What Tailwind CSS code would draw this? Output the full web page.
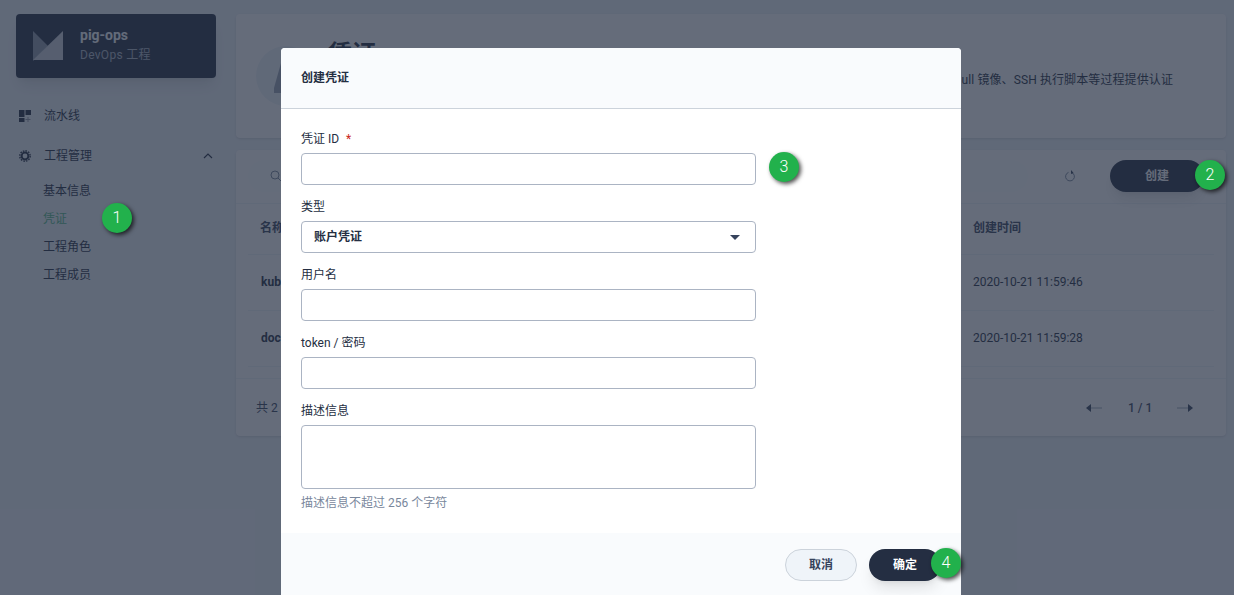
<!DOCTYPE html>
<html lang="zh">
<head>
    <meta charset="UTF-8">
    <title>凭证</title>
    <script src="https://cdn.jsdelivr.net/npm/@tailwindcss/browser@4"></script>
</head>
<body class="relative h-[595px] w-[1234px] overflow-hidden bg-[#eff4f9] font-['Roboto','Noto_Sans_CJK_SC',sans-serif] text-xs text-[#242e42]">

    <!-- Page behind the dialog -->
    <div class="flex h-full gap-5 py-3.5 pl-4 pr-2">
        <aside class="w-[200px] shrink-0">
            <div class="flex h-16 items-center rounded bg-[#242e42] pl-[17px] shadow-lg">
                <svg class="h-[30px] w-[30px]" viewBox="0 0 30 30">
                    <path d="M0 0 L15 15 L0 30 Z" fill="#8d98a8" />
                    <path d="M30 0 L30 29 L0 29 Z" fill="#cbd1da" />
                </svg>
                <div class="ml-[17px] -mt-[2px]">
                    <div class="text-sm font-bold leading-5 text-[#f9fbfd]">pig-ops</div>
                    <div class="text-xs leading-5 tracking-[0.3px] text-[#abb4c3]">DevOps 工程</div>
                </div>
            </div>
            <nav class="mt-[18px] pl-[3px]">
                <div class="flex h-10 items-center gap-[13px]">
                    <svg class="h-3 w-3" viewBox="0 0 12 12" fill="#242e42">
                        <rect width="5.5" height="7" />
                        <rect x="6.5" width="5.5" height="5" />
                        <rect y="8" width="5.5" height="4" />
                        <path d="M8.5 7h1v2h2v1h-2v2h-1v-2h-2V9h2z" opacity=".45" />
                    </svg>
                    <span>流水线</span>
                </div>
                <div class="flex h-10 items-center gap-[13px]">
                    <svg class="h-3 w-3" viewBox="0 0 12 12" fill="none" stroke="#242e42">
                        <circle cx="6" cy="6" r="3.4" stroke-width="2" />
                        <circle cx="6" cy="6" r="5.2" stroke-width="1.4" stroke-dasharray="1.6 1.1" />
                    </svg>
                    <span>工程管理</span>
                    <svg class="ml-auto mr-[3px] h-2 w-2.5" viewBox="0 0 10 8" fill="none" stroke="#242e42" stroke-width="1.2">
                        <path d="M1 6l4-4 4 4" />
                    </svg>
                </div>
                <ul class="mt-px pl-6 leading-7">
                    <li>基本信息</li>
                    <li class="text-[#55bc8a]">凭证</li>
                    <li>工程角色</li>
                    <li>工程成员</li>
                </ul>
            </nav>
        </aside>

        <main class="flex-1">
            <section class="flex h-[124px] items-center rounded bg-white pl-5 shadow-sm">
                <div class="h-[60px] w-[60px] shrink-0 rounded-full bg-[#eff4f9]">
                    <svg class="h-[60px] w-[60px]" viewBox="0 0 60 60">
                        <path d="M25 17 L18 42 L18 47 L32 47 L32 17 Z" fill="#9aa5b5" />
                    </svg>
                </div>
                <div class="ml-3 mt-6 self-start text-2xl leading-8 font-semibold">凭证</div>
                <div class="ml-auto mr-[53px] mt-2 tracking-[0.1px]">ull 镜像、SSH 执行脚本等过程提供认证</div>
            </section>
            <section class="mt-3 h-[286px] rounded bg-white shadow-sm">
                <div class="flex h-[54px] items-center border-b border-[#eff4f9] pb-px pl-3 pr-[22px]">
                    <div class="flex h-8 w-[780px] items-center rounded-full bg-[#fcfdfe] pl-[22px]">
                        <svg class="h-3 w-3" viewBox="0 0 12 12" fill="none" stroke="#79879c">
                            <circle cx="5" cy="5" r="4" />
                            <path d="M8 8l3.5 3.5" />
                        </svg>
                    </div>
                    <svg class="ml-auto mr-[34px] h-3 w-3" viewBox="0 0 12 12" fill="none" stroke="#79879c">
                        <path d="M7.5 2.4a4.4 4.4 0 1 1-3 0" />
                        <path d="M7 0l2.6 3L7 4z" fill="#36435c" stroke="none" />
                    </svg>
                    <div class="flex h-8 w-[94px] items-center justify-center rounded-full bg-[#242e42] font-bold text-white shadow-lg">创建</div>
                </div>
                <div class="mx-3">
                    <div class="flex h-[51px] items-center border-b border-[#eff4f9] pb-0.5 pl-3 font-bold text-[#36435c]">名称<span class="ml-auto w-[241px]">创建时间</span></div>
                    <div class="flex h-14 items-center border-b border-[#eff4f9] pb-0.5 pl-[13px]"><b>kub</b><span class="ml-auto w-[241px]">2020-10-21 11:59:46</span></div>
                    <div class="flex h-14 items-center border-b border-[#eff4f9] pb-0.5 pl-[13px]"><b>doc</b><span class="ml-auto w-[241px]">2020-10-21 11:59:28</span></div>
                </div>
                <div class="mt-[11px] flex h-[58px] items-center border-t border-[#eff4f9] pl-5 pr-[33px] text-[#36435c]">
                    共 2
                    <svg class="ml-auto h-2.5 w-4" viewBox="0 0 16 10">
                        <path d="M0 5l5-4v8z" fill="#36435c" />
                        <path d="M5 4.5h11v1H5z" fill="#9aa5b5" />
                    </svg>
                    <span class="mx-[26px] w-[23px] whitespace-nowrap text-center font-medium">1 / 1</span>
                    <svg class="h-2.5 w-4" viewBox="0 0 16 10">
                        <path d="M16 5l-5-4v8z" fill="#36435c" />
                        <path d="M0 4.5h11v1H0z" fill="#9aa5b5" />
                    </svg>
                </div>
            </section>
        </main>
    </div>

    <!-- Overlay -->
    <div class="absolute inset-0 bg-[#242e42]/70"></div>

    <!-- Dialog -->
    <div class="absolute left-[281px] top-12 w-[680px] rounded bg-white">
        <div class="flex h-[61px] items-center rounded-t border-b border-[#ccd3db] bg-[#f9fbfd] px-5 font-bold">创建凭证</div>
        <form class="flex h-[424px] flex-col px-5 pt-[20px]">
            <label class="mb-1 h-5 leading-5">凭证 ID <span class="ml-1 text-[#ca2621]">*</span></label>
            <div class="mb-3 h-8 w-[455px] rounded border border-[#abb4c3]"></div>
            <label class="mb-1 h-5 leading-5">类型</label>
            <div class="mb-3 flex h-8 w-[455px] items-center justify-between rounded border border-[#abb4c3] pl-3 pr-[15px] font-bold">
                账户凭证
                <span class="h-0 w-0 border-x-[5px] border-t-[5px] border-x-transparent border-t-[#36435c]"></span>
            </div>
            <label class="mb-1 h-5 leading-5">用户名</label>
            <div class="mb-3 h-8 w-[455px] rounded border border-[#abb4c3]"></div>
            <label class="mb-1 h-5 leading-5">token / 密码</label>
            <div class="mb-3 h-8 w-[455px] rounded border border-[#abb4c3]"></div>
            <label class="mb-1 h-5 leading-5">描述信息</label>
            <div class="h-16 w-[455px] rounded border border-[#abb4c3]"></div>
            <p class="mt-1 leading-5 text-[#79879c]">描述信息不超过 256 个字符</p>
        </form>
        <div class="flex h-[80px] justify-end gap-3 bg-[#f9fbfd] pr-5 pt-[16px]">
            <div class="flex h-8 w-[72px] items-center justify-center rounded-full border border-[#ccd3db] bg-[#eff4f9] font-bold text-[#36435c]">取消</div>
            <div class="flex h-8 w-[72px] items-center justify-center rounded-full bg-[#242e42] font-bold text-white shadow-lg">确定</div>
        </div>
    </div>

    <!-- Step badges -->
    <div class="absolute left-[102px] top-[203px] flex h-[30px] w-[30px] items-center justify-center rounded-full bg-[#22b14c] text-base font-light text-white shadow-[2px_2px_4px_rgba(0,0,0,0.7)]">1</div>
    <div class="absolute left-[1195px] top-[160px] flex h-[30px] w-[30px] items-center justify-center rounded-full bg-[#22b14c] text-base font-light text-white shadow-[2px_2px_4px_rgba(0,0,0,0.7)]">2</div>
    <div class="absolute left-[769px] top-[152px] flex h-[30px] w-[30px] items-center justify-center rounded-full bg-[#22b14c] text-base font-light text-white shadow-[2px_2px_4px_rgba(0,0,0,0.7)]">3</div>
    <div class="absolute left-[931px] top-[548px] flex h-[30px] w-[30px] items-center justify-center rounded-full bg-[#22b14c] text-base font-light text-white shadow-[2px_2px_4px_rgba(0,0,0,0.7)]">4</div>
</body>
</html>
